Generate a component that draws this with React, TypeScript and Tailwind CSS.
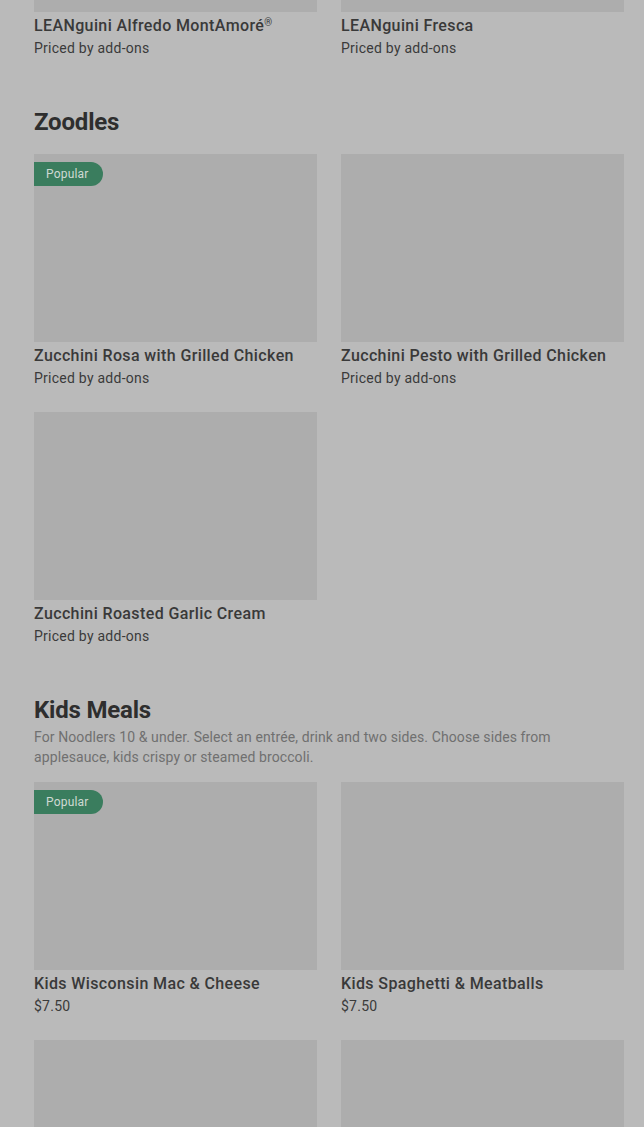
import React from "react";

type Item = { name: React.ReactNode; price: string; popular?: boolean };

const font = { fontFamily: "Roboto, 'Noto Sans', sans-serif" };

function Card({ item }: { item: Item }) {
  return (
    <div className="flex flex-col">
      <div className="relative h-[188px] bg-[#adadad]">
        {item.popular && (
          <div className="absolute left-0 top-[8px] flex h-[24px] items-center rounded-r-full bg-[#3a7d5e] pl-[12px] pr-[14px] text-[12px] tracking-[0.2px] text-[#cfd9d3]">
            Popular
          </div>
        )}
      </div>
      {item.price && (
        <>
          <div className="mt-[3px] h-[22px] text-[16px] leading-[22px] font-medium tracking-[0.38px] text-[#393939]">{item.name}</div>
          <div className="mt-[1px] text-[14px] leading-[20px] tracking-[0.25px] text-[#3a3a3a]">{item.price}</div>
        </>
      )}
    </div>
  );
}

function Grid({ items }: { items: Item[] }) {
  return (
    <div className="grid grid-cols-2 gap-x-[24px] gap-y-[24px]">
      {items.map((it, i) => (
        <Card key={i} item={it} />
      ))}
    </div>
  );
}

export default function App() {
  return (
    <div className="h-[1127px] overflow-hidden bg-[#bababa]" style={font}>
      <div className="-mt-[176px] pl-[34px] pr-[20px]">
        <Grid
          items={[
            {
              name: (
                <>
                  LEANguini Alfredo MontAmoré<span className="relative -top-[5px] text-[10px] leading-none">®</span>
                </>
              ),
              price: "Priced by add-ons",
            },
            { name: "LEANguini Fresca", price: "Priced by add-ons" },
          ]}
        />
        <h2 className="mt-[48px] text-[24px] leading-[32px] font-bold tracking-[-0.2px] text-[#2e2e2e]">Zoodles</h2>
        <div className="mt-[16px]">
          <Grid
            items={[
              { name: "Zucchini Rosa with Grilled Chicken", price: "Priced by add-ons", popular: true },
              { name: "Zucchini Pesto with Grilled Chicken", price: "Priced by add-ons" },
              { name: "Zucchini Roasted Garlic Cream", price: "Priced by add-ons" },
            ]}
          />
        </div>
        <h2 className="mt-[48px] text-[24px] leading-[32px] font-bold tracking-[-0.2px] text-[#2e2e2e]">Kids Meals</h2>
        <p className="mt-[1px] pr-[60px] text-[14px] leading-[20px] tracking-[0.1px] text-[#707070]">
          For Noodlers 10 &amp; under. Select an entrée, drink and two sides. Choose sides from applesauce, kids crispy or steamed broccoli.
        </p>
        <div className="mt-[15px]">
          <Grid
            items={[
              { name: "Kids Wisconsin Mac & Cheese", price: "$7.50", popular: true },
              { name: "Kids Spaghetti & Meatballs", price: "$7.50" },
              { name: "", price: "" },
              { name: "", price: "" },
            ]}
          />
        </div>
      </div>
    </div>
  );
}
